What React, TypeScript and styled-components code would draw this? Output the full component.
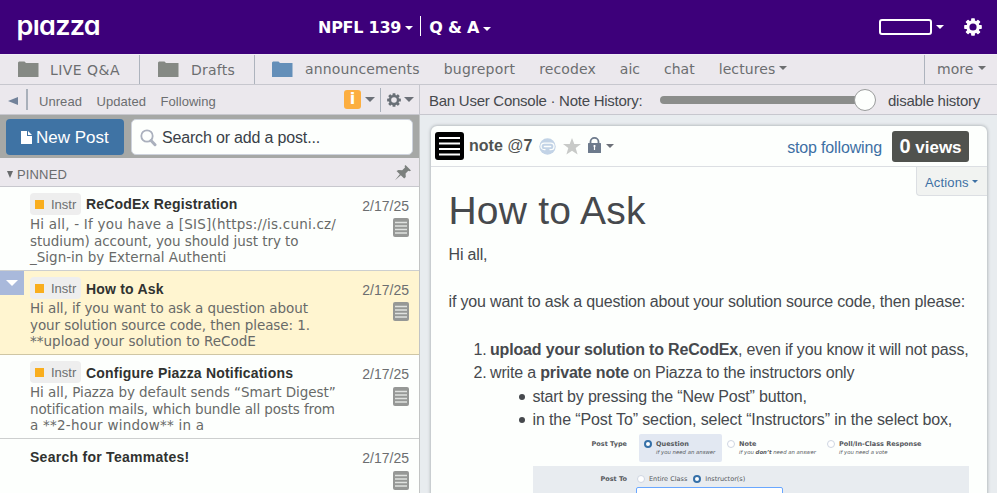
import React from "react";
import styled, { createGlobalStyle } from "styled-components";

const sans = `"Liberation Sans", Arial, sans-serif`;
const wide = `"DejaVu Sans", Verdana, sans-serif`;

const GlobalStyle = createGlobalStyle`
  * { box-sizing: border-box; }
  html, body { margin: 0; padding: 0; overflow: hidden; }
  body { background: #e8ecef; font-family: ${sans}; color: #46494d; }
`;

const Page = styled.div`
  width: 997px;
  height: 493px;
  display: flex;
  flex-direction: column;
  overflow: hidden;
  white-space: nowrap;
`;

const Caret = styled.span<{ $size?: number; $color?: string; $gap?: number; $drop?: number }>`
  display: inline-block;
  flex: none;
  width: 0;
  height: 0;
  margin-left: ${(p) => p.$gap ?? 4}px;
  margin-top: ${(p) => p.$drop ?? 0}px;
  border-left: ${(p) => p.$size ?? 4}px solid transparent;
  border-right: ${(p) => p.$size ?? 4}px solid transparent;
  border-top: ${(p) => p.$size ?? 4}px solid ${(p) => p.$color ?? "#fff"};
`;

/* ---------- Top bar ---------- */
const TopBar = styled.header`
  height: 54px;
  flex: none;
  display: grid;
  grid-template-columns: 318px 561px 118px;
  align-items: center;
  background: #3d007a;
  color: #fff;
`;

const Logo = styled.div`
  padding-left: 16.5px;
  margin-top: -2px;
  font: 600 27px/32px Inter, sans-serif;
  font-feature-settings: "cv11", "ss01";
  letter-spacing: -0.7px;
`;

const CourseNav = styled.nav`
  display: flex;
  align-items: center;
  height: 20px;
  padding-top: 1px;
  font: bold 16px/20px ${wide};
  letter-spacing: -0.25px;
`;

const CourseDivider = styled.span`
  width: 1px;
  height: 20px;
  margin: -4px 8px 0 7px;
  background: #fff;
`;

const Account = styled.div`
  display: flex;
  align-items: center;
`;

const AccountBox = styled.span`
  width: 53px;
  height: 16px;
  border: 2px solid #fff;
  border-radius: 3px;
`;

const GearWrap = styled.span<{ $ml: number }>`
  display: flex;
  margin-left: ${(p) => p.$ml}px;
`;

function Gear({ size, color }: { size: number; color: string }) {
  return (
    <svg width={size} height={size} viewBox="-10 -10 20 20">
      <defs>
        <mask id="gearhole" maskUnits="userSpaceOnUse" x="-10" y="-10" width="20" height="20">
          <rect x="-10" y="-10" width="20" height="20" fill="#fff" />
          <circle r="4" fill="#000" />
        </mask>
      </defs>
      <g mask="url(#gearhole)">
        {[0, 45, 90, 135].map((a) => (
          <rect key={a} x="-2.1" y="-9.8" width="4.2" height="19.6" rx="0.8" fill={color} transform={`rotate(${a})`} />
        ))}
        <circle r="7.4" fill={color} />
      </g>
    </svg>
  );
}

/* ---------- Folder bar ---------- */
const FolderBar = styled.nav`
  height: 31px;
  flex: none;
  display: flex;
  background: #ebe8ed;
  border-top: 1px solid #f1edf6;
  border-bottom: 1px solid #c7c7ce;
  font: 14px/29px ${wide};
  color: #6c6e70;
`;

const FolderGroup = styled.div<{ $w?: number; $pl: number; $last?: boolean }>`
  ${(p) => (p.$w ? `width: ${p.$w}px; flex: none;` : "flex: 1;")}
  display: flex;
  align-items: center;
  padding-left: ${(p) => p.$pl}px;
  border-right: ${(p) => (p.$last ? "0" : "1px solid #adb3bd")};
`;

const FolderLabel = styled.span<{ $ml: number; $ls?: number; $pt?: number }>`
  margin-left: ${(p) => p.$ml}px;
  padding-top: ${(p) => p.$pt ?? 0}px;
  letter-spacing: ${(p) => p.$ls ?? 0}px;
`;

function Folder({ color }: { color: string }) {
  return (
    <svg width="21" height="17" viewBox="0 0 21 17">
      <path d="M0 1.5 L1 0.5 H6.5 L8 2 H20.5 V16 H0 Z" fill={color} />
    </svg>
  );
}

/* ---------- Tool bar ---------- */
const ToolBar = styled.div`
  height: 30px;
  flex: none;
  display: grid;
  grid-template-columns: 420px 1fr;
  background: #ebe8ed;
  border-bottom: 1px solid #c7c7ce;
`;

const Filters = styled.div`
  display: flex;
  align-items: center;
  padding-right: 5px;
  border-right: 1px solid #c7c7ce;
  font-size: 13px;
  color: #6c6e70;
`;

const BackArrow = styled.span`
  margin: 2px 8px 0 8px;
  border-top: 4px solid transparent;
  border-bottom: 4px solid transparent;
  border-right: 10px solid #72829a;
`;

const ToolDivider = styled.span<{ $h: number; $w?: number }>`
  width: ${(p) => p.$w ?? 1}px;
  height: ${(p) => p.$h}px;
  background: #a9b0ba;
`;

const Filter = styled.span<{ $w: number; $ml: number }>`
  width: ${(p) => p.$w}px;
  margin-left: ${(p) => p.$ml}px;
  padding-top: 4px;
  letter-spacing: 0.05px;
`;

const InfoBadge = styled.span`
  width: 17px;
  height: 19px;
  margin-left: auto;
  border-radius: 3px;
  background: #fcae40;
  color: #fff;
  font: bold 16px/18px ${wide};
  text-align: center;
`;

const History = styled.div`
  display: flex;
  align-items: center;
  padding: 2px 0 0 9px;
  font-size: 15px;
  color: #46494d;
`;

const HistoryLabel = styled.span<{ $w: number }>`
  width: ${(p) => p.$w}px;
  letter-spacing: -0.26px;
`;

const Slider = styled.div`
  width: 216px;
  height: 22px;
  margin: -2px 12px 0 0;
  display: flex;
  align-items: center;
`;

const Track = styled.span`
  flex: 1;
  height: 8px;
  margin-right: -4px;
  border-radius: 4px;
  background: #8b8d8b;
`;

const Thumb = styled.span`
  width: 22px;
  height: 22px;
  border: 1px solid #999b9b;
  border-radius: 50%;
  background: #fdfffd;
  z-index: 1;
`;

/* ---------- Feed ---------- */
const Main = styled.main`
  flex: 1;
  min-height: 0;
  display: grid;
  grid-template-columns: 420px 1fr;
`;

const Feed = styled.section`
  display: flex;
  flex-direction: column;
  border-right: 1px solid #c2c4c4;
  background: #fdfffd;
  overflow: hidden;
`;

const Composer = styled.div`
  height: 43px;
  flex: none;
  display: flex;
  align-items: center;
  gap: 7px;
  padding: 0 6px;
  background: #a6a8a6;
`;

const NewPost = styled.button`
  width: 118px;
  height: 36px;
  padding: 3px 0 0 15px;
  display: flex;
  align-items: center;
  gap: 4px;
  border: 0;
  border-radius: 4px;
  background: #3f73a4;
  color: #fff;
  font: 17px ${sans};
  svg { margin-top: -1px; }
`;

const SearchBox = styled.div`
  flex: 1;
  height: 36px;
  display: flex;
  align-items: center;
  gap: 5px;
  padding: 2px 0 0 8px;
  border: 1px solid #cdd2dc;
  border-radius: 5px;
  background: #fdfffd;
  color: #3a3f48;
  font-size: 16px;
  letter-spacing: -0.17px;
`;

const SectionHead = styled.div`
  height: 29px;
  flex: none;
  display: flex;
  align-items: center;
  padding: 4px 8px 0 7px;
  border-bottom: 1px solid #c8c8ce;
  background: #ebe8ed;
  color: #6a6c6e;
  font-size: 13px;
  letter-spacing: 0.15px;
`;

const SectionCaret = styled.span`
  margin: 1px 4px 0 0;
  border-left: 3.5px solid transparent;
  border-right: 3.5px solid transparent;
  border-top: 7px solid #686a6c;
`;

const PinWrap = styled.span`
  display: flex;
  margin: -3px 0 0 auto;
`;

const Item = styled.article<{ $active?: boolean }>`
  height: 84px;
  flex: none;
  display: grid;
  grid-template-columns: 30px 1fr 60px;
  padding-right: 10px;
  border-bottom: 1px solid ${(p) => (p.$active ? "#cfc6a4" : "#cdcfcf")};
  background: ${(p) => (p.$active ? "#fff5d0" : "#fdfffd")};
  overflow: hidden;
`;

const Marker = styled.span`
  width: 24px;
  height: 24px;
  display: flex;
  align-items: center;
  justify-content: center;
  background: #a9b9db;
`;

const ItemTitle = styled.div`
  height: 22px;
  margin-top: 6px;
  display: flex;
  align-items: center;
  color: #303230;
  font-weight: bold;
  font-size: 14px;
`;

const TitleText = styled.span<{ $ls: number; $drop: number }>`
  padding-top: ${(p) => p.$drop}px;
  letter-spacing: ${(p) => p.$ls}px;
`;

const Tag = styled.span`
  width: 51px;
  height: 22px;
  margin-right: 5px;
  padding-left: 5px;
  display: flex;
  align-items: center;
  gap: 7px;
  border-radius: 4px;
  background: #eeeeee;
  color: #6c6e70;
  font-weight: normal;
  font-size: 13px;
`;

const TagSquare = styled.span`
  width: 9px;
  height: 9px;
  background: #f9ae1e;
`;

const Excerpt = styled.div`
  margin-top: 1px;
  font: 13.5px/16.5px ${wide};
  color: #686a68;
`;

const Line = styled.div<{ $ls: number }>`
  letter-spacing: ${(p) => p.$ls}px;
`;

const ItemSide = styled.div`
  display: flex;
  flex-direction: column;
  align-items: flex-end;
  padding-top: 11px;
  color: #6c6e70;
  font-size: 14px;
  line-height: 17px;
`;

const NoteWrap = styled.span<{ $mt: number }>`
  display: flex;
  margin-top: ${(p) => p.$mt}px;
`;

function NoteIcon() {
  return (
    <svg width="16" height="19" viewBox="0 0 16 19">
      <rect width="16" height="19" rx="2" fill="#969896" />
      <path d="M2 4.5H14M2 8H14M2 11.5H14M2 15H14" stroke="#e0e2e0" strokeWidth="1.3" />
    </svg>
  );
}

/* ---------- Note ---------- */
const Stage = styled.section`
  padding: 11px 10px 0 11px;
  background: #e8ecef;
`;

const Card = styled.article`
  height: 380px;
  border-radius: 6px 6px 0 0;
  background: #fdfffd;
  box-shadow: 0 0 3px 1px #b9bec2;
`;

const CardHead = styled.div`
  height: 41px;
  display: flex;
  align-items: center;
  padding: 0 18px 0 4px;
  border-bottom: 1px solid #dcdfe3;
`;

const NoteTitle = styled.span`
  width: 70px;
  margin-left: 5px;
  color: #505352;
  font-weight: bold;
  font-size: 16px;
  span { font-weight: normal; }
`;

const HeadIcon = styled.span<{ $w: number; $top?: number }>`
  width: ${(p) => p.$w}px;
  display: flex;
  margin-top: ${(p) => p.$top ?? 0}px;
`;

const Follow = styled.a`
  margin: 3px 10px 0 auto;
  color: #3d70a4;
  font-size: 16px;
  letter-spacing: -0.15px;
`;

const Views = styled.span`
  width: 77px;
  height: 31px;
  border-radius: 3px;
  background: #50524e;
  color: #fff;
  font: bold 17px/31px ${sans};
  text-align: center;
  b { font-size: 20px; }
`;

const CardBody = styled.div`
  height: 326px;
  padding-left: 17.5px;
  overflow: hidden;
  font-size: 16px;
  line-height: 23.4px;
  letter-spacing: -0.17px;
`;

const Actions = styled.div`
  width: 71px;
  height: 29px;
  margin: 0 0 -29px auto;
  padding: 3px 0 0 8px;
  display: flex;
  align-items: center;
  border: 1px solid #dcdfe3;
  border-width: 0 0 1px 1px;
  border-radius: 0 0 0 4px;
  background: #f1f3f1;
  color: #3d70a4;
  font-size: 13px;
  letter-spacing: 0.15px;
`;

const Heading = styled.h1`
  margin: 0;
  padding-top: 18px;
  height: 76px;
  font: 39px/52px ${sans};
  letter-spacing: 0.2px;
  color: #46494d;
`;

const Para = styled.p<{ $h: number }>`
  margin: 0;
  height: ${(p) => p.$h}px;
`;

const Steps = styled.ol`
  margin: 0;
  padding-left: 41.5px;
  list-style: none;
`;

const Step = styled.li`
  display: flex;
  height: 23.4px;
  white-space: pre;
  &::before { content: attr(data-n); width: 16.5px; margin-left: -16.5px; }
`;

const Bullets = styled.ul`
  margin: 0 0 2px;
  padding-left: 84px;
  list-style: none;
`;

const Bullet = styled.li<{ $ls?: number }>`
  display: flex;
  align-items: center;
  height: 23.4px;
  letter-spacing: ${(p) => p.$ls ?? -0.17}px;
  &::before { content: ""; width: 6px; height: 6px; margin: 1px 8px 0 -14px; border-radius: 50%; background: #46494d; }
`;

/* ---------- Form preview ---------- */
const Preview = styled.div`
  margin-left: 84.5px;
  width: 436px;
  font: 6.5px/8px ${wide};
  letter-spacing: 0;
  color: #55585c;
`;

const PreviewRow = styled.div<{ $shade?: boolean }>`
  display: grid;
  grid-template-columns: 94px 1fr;
  height: ${(p) => (p.$shade ? 40 : 28)}px;
  margin-bottom: 4px;
  background: ${(p) => (p.$shade ? "#e8ecf0" : "transparent")};
`;

const PreviewLabel = styled.b<{ $pt: number }>`
  padding-top: ${(p) => p.$pt}px;
  text-align: right;
`;

const Options = styled.div`
  display: flex;
  padding-left: 12px;
`;

const Option = styled.div<{ $w: number; $on?: boolean }>`
  width: ${(p) => p.$w}px;
  height: 28px;
  display: flex;
  padding: 6px 0 0 5px;
  gap: 4px;
  border-radius: 2px;
  background: ${(p) => (p.$on ? "#e2e8f2" : "transparent")};
  i { display: block; font-size: 5.35px; }
`;

const Radio = styled.span<{ $on?: boolean }>`
  width: 8px;
  height: 8px;
  flex: none;
  border-radius: 50%;
  border: ${(p) => (p.$on ? "2.6px solid #3570a8" : "1px solid #cfd6e2")};
  background: #fff;
`;

const Choices = styled.div`
  display: flex;
  gap: 6px;
  padding-left: 10px;
`;

const Choice = styled.span`
  display: flex;
  gap: 4px;
`;

const PostTo = styled.div`
  padding-top: 9px;
`;

const SelectBox = styled.div`
  width: 147px;
  height: 24px;
  margin: 4px 0 0 9px;
  border: 1.5px solid #69a7ff;
  border-radius: 2px;
  background: #fff;
`;

type Post = { title: string; ls: number; drop: number; iconGap: number; instr?: boolean; active?: boolean; lines: [string, number][] };

const posts: Post[] = [
  {
    title: "ReCodEx Registration", ls: 0.19, drop: 0, iconGap: 3, instr: true,
    lines: [
      ["Hi all, - If you have a [SIS](https://is.cuni.cz/", 0.21],
      ["studium) account, you should just try to", -0.05],
      ["_Sign-in by External Authenti", 0],
    ],
  },
  {
    title: "How to Ask", ls: 0.2, drop: 2, iconGap: 3, instr: true, active: true,
    lines: [
      ["Hi all, if you want to ask a question about", -0.08],
      ["your solution source code, then please: 1.", -0.09],
      ["**upload your solution to ReCodE", 0],
    ],
  },
  {
    title: "Configure Piazza Notifications", ls: 0.19, drop: 2, iconGap: 4, instr: true,
    lines: [
      ["Hi all, Piazza by default sends “Smart Digest”", -0.05],
      ["notification mails, which bundle all posts from", -0.13],
      ["a **2-hour window** in a", 0.24],
    ],
  },
  { title: "Search for Teammates!", ls: 0.27, drop: 2, iconGap: 4, lines: [] },
];

export default function App() {
  return (
    <Page>
      <GlobalStyle />
      <TopBar>
        <Logo>pıazza</Logo>
        <CourseNav>
          NPFL 139
          <Caret $gap={4} />
          <CourseDivider />
          Q &amp; A
          <Caret $gap={4} $drop={2} />
        </CourseNav>
        <Account>
          <AccountBox />
          <Caret $gap={4} />
          <GearWrap $ml={20}><Gear size={18} color="#fff" /></GearWrap>
        </Account>
      </TopBar>

      <FolderBar>
        <FolderGroup $w={140} $pl={18}>
          <Folder color="#858984" />
          <FolderLabel $ml={11} $ls={0.45} $pt={2}>LIVE Q&amp;A</FolderLabel>
        </FolderGroup>
        <FolderGroup $w={115} $pl={18}>
          <Folder color="#858984" />
          <FolderLabel $ml={12} $ls={0.25} $pt={2}>Drafts</FolderLabel>
        </FolderGroup>
        <FolderGroup $pl={17}>
          <Folder color="#648fb9" />
          <FolderLabel $ml={12} $ls={0.14}>announcements</FolderLabel>
          <FolderLabel $ml={24} $ls={0.24}>bugreport</FolderLabel>
          <FolderLabel $ml={24} $ls={0.1}>recodex</FolderLabel>
          <FolderLabel $ml={24}>aic</FolderLabel>
          <FolderLabel $ml={24}>chat</FolderLabel>
          <FolderLabel $ml={24} $ls={0.1}>lectures</FolderLabel>
          <Caret $color="#6c6e70" $drop={-3} $gap={4} />
        </FolderGroup>
        <FolderGroup $w={72} $pl={12} $last>
          more
          <Caret $color="#6c6e70" $drop={-3} $gap={5} />
        </FolderGroup>
      </FolderBar>

      <ToolBar>
        <Filters>
          <BackArrow />
          <ToolDivider $h={21} $w={2} />
          <Filter $ml={11} $w={57.5}>Unread</Filter>
          <Filter $ml={0} $w={64}>Updated</Filter>
          <Filter $ml={0} $w={64}>Following</Filter>
          <InfoBadge>i</InfoBadge>
          <Caret $color="#6c7078" $size={5} $gap={4} />
          <GearWrap $ml={5}><ToolDivider $h={24} /></GearWrap>
          <GearWrap $ml={6}><Gear size={14} color="#697077" /></GearWrap>
          <Caret $color="#6c7078" $size={5} $gap={3} />
        </Filters>
        <History>
          <HistoryLabel $w={231}>Ban User Console · Note History:</HistoryLabel>
          <Slider><Track /><Thumb /></Slider>
          <HistoryLabel $w={100}>disable history</HistoryLabel>
        </History>
      </ToolBar>

      <Main>
        <Feed>
          <Composer>
            <NewPost>
              <svg width="11" height="13" viewBox="0 0 11 13">
                <path d="M0 0H6V5H11V13H0Z M7 0L11 4H7Z" fill="#fff" />
              </svg>
              New Post
            </NewPost>
            <SearchBox>
              <svg width="17" height="18" viewBox="0 0 17 18">
                <circle cx="7" cy="7" r="5.7" fill="none" stroke="#aab0bd" strokeWidth="1.8" />
                <path d="M11 11.5L15 15.7" stroke="#aab0bd" strokeWidth="3" strokeLinecap="round" />
              </svg>
              Search or add a post...
            </SearchBox>
          </Composer>
          <SectionHead>
            <SectionCaret />
            PINNED
            <PinWrap>
              <svg width="16" height="16" viewBox="0 0 16 16">
                <path d="M10.5 0L16 5.5L14.5 6.2L13.3 5.8L10.6 8.6L10.8 12L9.2 13.4L5.8 10.2L0 15.3L4.8 9.2L1.5 6L3.5 4.9L7.2 5.2L10 2.5L9.6 1Z" fill="#7c807e" />
              </svg>
            </PinWrap>
          </SectionHead>
          {posts.map((post) => (
            <Item key={post.title} $active={post.active}>
              <div>
                {post.active && (
                  <Marker>
                    <svg width="12" height="6" viewBox="0 0 12 6"><path d="M0 0H12L6 6Z" fill="#fff" /></svg>
                  </Marker>
                )}
              </div>
              <div>
                <ItemTitle>
                  {post.instr && <Tag><TagSquare />Instr</Tag>}
                  <TitleText $ls={post.ls} $drop={post.drop}>{post.title}</TitleText>
                </ItemTitle>
                <Excerpt>
                  {post.lines.map(([text, ls]) => <Line key={text} $ls={ls}>{text}</Line>)}
                </Excerpt>
              </div>
              <ItemSide>
                2/17/25
                <NoteWrap $mt={post.iconGap}><NoteIcon /></NoteWrap>
              </ItemSide>
            </Item>
          ))}
        </Feed>

        <Stage>
          <Card>
            <CardHead>
              <svg width="29" height="28" viewBox="0 0 29 28">
                <rect width="29" height="28" rx="3" fill="#000" />
                <path d="M4 6H25M4 11.5H25M4 17H25M4 22.5H25" stroke="#fff" strokeWidth="1.8" />
              </svg>
              <NoteTitle>note <span>@</span>7</NoteTitle>
              <HeadIcon $w={24}>
                <svg width="17" height="17" viewBox="0 0 17 17">
                  <circle cx="8.5" cy="8.5" r="8.2" fill="#c2d3e6" />
                  <path d="M6.5 11.6H5.2A3.1 3.1 0 0 1 5.2 5.2H11.8A3.1 3.1 0 0 1 11.8 11.6H10.5" fill="none" stroke="#fdfffd" strokeWidth="1.3" />
                  <path d="M5.5 8.5H11.5" fill="none" stroke="#fdfffd" strokeWidth="1.6" strokeLinecap="round" />
                </svg>
              </HeadIcon>
              <HeadIcon $w={25}>
                <svg width="18" height="17" viewBox="0 0 18 17">
                  <path d="M9 0L11.3 6H18L12.7 10L14.6 16.5L9 12.7L3.4 16.5L5.3 10L0 6H6.7Z" fill="#c8cac8" />
                </svg>
              </HeadIcon>
              <HeadIcon $w={14} $top={-3}>
                <svg width="13" height="16" viewBox="0 0 13 16">
                  <path d="M2.5 7V4.8A4 3.9 0 0 1 10.5 4.8V7" fill="none" stroke="#6d7a8c" strokeWidth="1.8" />
                  <rect y="6" width="13" height="10" rx="0.5" fill="#6d7a8c" />
                  <path d="M6.5 8V13M5.3 9H7.7" stroke="#fff" strokeWidth="1.2" />
                </svg>
              </HeadIcon>
              <Caret $color="#6c7078" $gap={4} $drop={-1} />
              <Follow>stop following</Follow>
              <Views><b>0</b> views</Views>
            </CardHead>
            <CardBody>
              <Actions>Actions<Caret $size={3} $gap={3} $color="#3d70a4" $drop={-2} /></Actions>
              <Heading>How to Ask</Heading>
              <Para $h={47}>Hi all,</Para>
              <Para $h={48}>if you want to ask a question about your solution source code, then please:</Para>
              <Steps>
                <Step data-n="1."><b>upload your solution to ReCodEx</b>, even if you know it will not pass,</Step>
                <Step data-n="2.">write a <b>private note</b> on Piazza to the instructors only</Step>
              </Steps>
              <Bullets>
                <Bullet>start by pressing the “New Post” button,</Bullet>
                <Bullet $ls={-0.12}>in the “Post To” section, select “Instructors” in the select box,</Bullet>
              </Bullets>
              <Preview>
                <PreviewRow>
                  <PreviewLabel $pt={6}>Post Type</PreviewLabel>
                  <Options>
                    <Option $w={83} $on><Radio $on /><div><b>Question</b><i>if you need an answer</i></div></Option>
                    <Option $w={100}><Radio /><div><b>Note</b><i>if you <b>don’t</b> need an answer</i></div></Option>
                    <Option $w={110}><Radio /><div><b>Poll/In-Class Response</b><i>if you need a vote</i></div></Option>
                  </Options>
                </PreviewRow>
                <PreviewRow $shade>
                  <PreviewLabel $pt={9}>Post To</PreviewLabel>
                  <PostTo>
                    <Choices>
                      <Choice><Radio />Entire Class</Choice>
                      <Choice><Radio $on />Instructor(s)</Choice>
                    </Choices>
                    <SelectBox />
                  </PostTo>
                </PreviewRow>
              </Preview>
            </CardBody>
          </Card>
        </Stage>
      </Main>
    </Page>
  );
}
